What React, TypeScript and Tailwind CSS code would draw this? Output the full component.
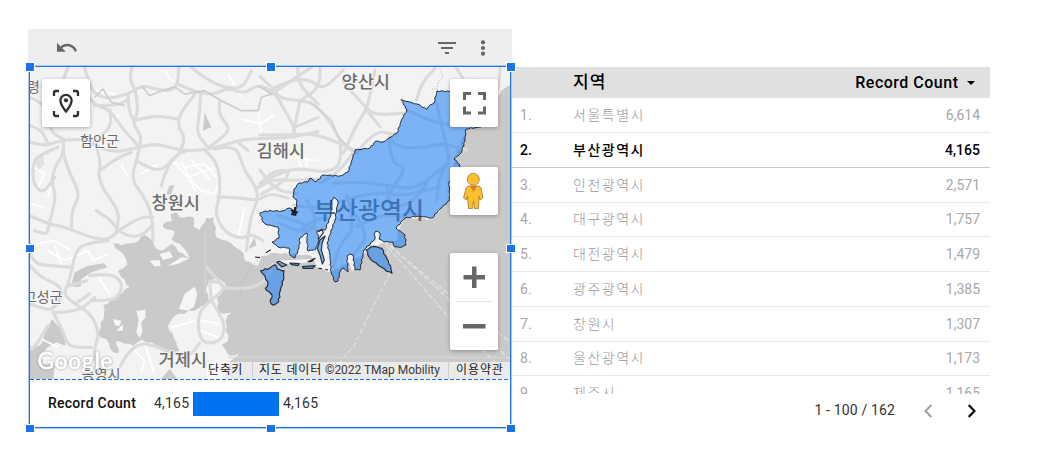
import type { ReactNode } from "react";

const rows = [
  { name: "서울특별시", count: "6,614", h: "h-[35px]" },
  { name: "부산광역시", count: "4,165", h: "h-[35px]", selected: true },
  { name: "인천광역시", count: "2,571", h: "h-[35px]" },
  { name: "대구광역시", count: "1,757", h: "h-[34px]" },
  { name: "대전광역시", count: "1,479", h: "h-[35px]" },
  { name: "광주광역시", count: "1,385", h: "h-[35px]" },
  { name: "창원시", count: "1,307", h: "h-[35px]" },
  { name: "울산광역시", count: "1,173", h: "h-[34px]" },
  { name: "제주시", count: "1,165", h: "h-[35px]" },
];

const westRoads = [
  "M6 235L50 247L100 228L180 226L200 245L260 266L330 250L390 238L460 262L530 258L600 240L650 225L750 222L790 220L870 203",
  "M120 10L98 60L130 85L160 60L180 95L205 125L245 137L280 190L330 245",
  "M170 10L180 50L200 90L240 105L300 90L325 75L350 65L400 80L435 78L450 55L452 10",
  "M312 10L302 45L325 80L330 150L312 175L340 215L335 250L325 290L310 345L345 395L365 430L374 480L375 530",
  "M300 90L302 145L320 170L350 162L390 155L450 165",
  "M325 290L370 318L410 315L440 275L480 258",
  "M200 125L235 125L280 120L300 105M6 185L40 195L60 240",
  "M450 60L500 85L560 92L600 70L650 90L690 60L740 85L765 130L800 190L795 220",
  "M500 92L455 145L450 190L470 215L460 262L430 290L410 330L400 365",
  "M518 95L515 150L505 205L535 245M575 115L570 150L605 190L590 215L545 248",
  "M560 255L620 242L640 290L650 320L685 370L690 410L668 455L655 560",
  "M530 258L560 285L575 330L575 400L560 450L590 505L640 525L670 510L705 530",
  "M570 398L640 402L690 410L725 388L780 402",
  "M6 455L60 480L110 488L180 518L240 530L270 500L340 458L374 460",
  "M105 260L115 310L158 390L133 435L130 490",
  "M105 225L110 265L82 305L70 350L85 400L60 490L58 512L20 500",
  "M90 250L30 275L15 300L15 360L45 390L80 340",
  "M205 250L220 295L210 330L225 375L245 400L275 450L265 500M205 440L250 468L270 500L310 520L350 510L375 480",
  "M215 320L260 285L310 265M490 10L550 60L640 80L670 20",
  "M240 530L165 538L140 570L125 650L105 690L140 720L190 750L215 810L195 860L210 925",
  "M6 605L35 640L90 660L105 690L75 740L35 730L6 720M120 665L175 650",
  "M6 570L20 600L70 605L130 610M60 785L15 860L6 850",
  "M75 745L150 745L200 700M78 750L105 800L120 850L190 850M140 720L185 690",
  "M185 635L245 627L280 650L280 685L255 708L195 710M545 652L575 652L590 675L555 705L508 745L515 838L580 835L592 780L565 735L550 705M545 655L550 705",
  "M515 838L488 880L440 870L390 850L340 835L300 865L275 910M590 672L660 677L715 650L735 600",
  "M6 100L50 120L55 150L70 205L105 225M245 137L255 180L215 220M690 370L730 345L790 350L870 345M700 390L760 360L790 320L740 320L700 355",
  "M730 90L850 10M800 190L870 160M660 260L630 235M810 10L805 55L870 120M590 670L535 610",
];

const northRoads = [
  "M0 170L40 205L60 235L120 242L160 250L210 302L240 365L285 400",
  "M0 345L100 345L160 340L240 370L280 390M120 242L100 340",
  "M250 400L290 312L320 270L335 200L345 150M290 400L340 330L410 345",
  "M250 185L320 268L350 285L430 280M320 270L360 320M180 145L185 200L120 242",
  "M240 360L248 430L200 460L100 440L0 490M0 450L40 510L110 520M285 390L245 450L180 490",
  "M40 205L90 180L150 178L190 210L250 150M470 240L480 195L525 145",
  "M440 270L500 300L580 318M590 145L630 215L650 180M720 145L715 220L690 240",
  "M390 350L400 380L480 385L540 372L570 375L620 390M388 350L390 430L440 440L400 500L380 540",
  "M220 490L290 485L380 495L470 510L560 430M530 250L545 320L560 375L570 430L540 460L530 540",
];

const southRoads = [
  "M160 75L240 90L300 62L420 35L480 50L600 20M200 60L240 130L190 160L120 130",
  "M110 105L180 125L260 165M320 45L350 140L300 190L280 260M350 140L420 100L500 110",
  "M440 20L450 90L520 65L560 10M345 105L390 160L340 225M180 150L230 110L300 120",
];

const minorRoads =
  "M430 290L470 310L530 300L575 350L560 390L520 380L470 330ZM460 290L500 380M490 290L550 350M480 340L560 310M640 165L700 180L740 150M690 140L700 210M20 310L50 330L30 370M6 420L50 430M60 560L110 590L180 560L195 590L240 570M80 545L100 600M210 640L245 690M320 860L350 890L340 930M350 840L380 930M430 790L500 770M520 770L575 780M520 800L570 820M780 270L840 285L830 320M800 260L820 310M200 80L260 90M410 20L430 50M600 30L640 100M240 170L280 150M80 310L60 400M30 820L90 850M40 880L120 905M650 430L630 520M760 280L870 290M20 540L80 530L130 560M720 230L760 270M340 330L390 300M280 300L300 340";

const landArea = "M6 9H1455V960H6Z";
const sea =
  "M245 535L280 544L330 532L350 512L375 533L385 555L430 560L460 578L488 585L455 605L380 602L365 590L395 587L395 567L432 540L452 565L486 580L465 550L430 525L440 502L405 490L405 480L432 472L428 450L445 445L455 460L497 460L497 488L515 498L535 462L557 460L565 520L595 530L640 560L655 592L690 605L700 575L745 567L850 575L870 615L909 624L1002 573L1035 545L1104 530L1115 492L1131 462L1212 465L1263 408L1273 354L1278 285L1314 198L1359 189L1386 138L1420 80L1455 55L1455 960L585 960L600 902L634 868L605 875L580 842L600 830L592 770L600 750L575 745L565 700L595 665L575 645L545 650L535 680L545 715L510 735L440 755L420 785L445 835L455 860L430 865L400 850L342 827L315 845L265 830L272 868L255 865L235 825L210 815L228 750L226 722L260 708L285 685L305 668L280 640L270 620L298 602L285 570Z";

const busan =
  "M401 99.5L407 101.5L417 104L427 109.3L430 105L434 103L437 91L450 91.5L470 86L482 108L481 127L466 129L465 141L461 153L454 159L460 165L455 177L449 182L450 200L440 209L432 218L418 216L405 218L396 228L405 235L406 245L402 247L395 247L393 242L384 242L379 239L380 233L376 231L374 234L375 239L364 250L360 270L355 270L353 255L350 254L347 256L348 272L343 268L340 272L338 281L335 282L331 272L330 255L327 243L335 220L338 201L334 197L331 201L331 215L325 230L317 231L319 240L316 249L308 251L307 240L307 233L300 238L299 248L295 258L290 255L289 248L278 247L272 242L279 238L278 227L268 225L263 222L260 213L265 211L282 211L290 208L296 212L297 200L293 197L294 189L299 183L308 182L310 178L316 182L323 175L340 176L348 172L352 160L355 150L370 148L376 141L383 142L397 133L402 119L407 110L405 106Z";

type Point = [number, number];

function subpaths(d: string): Point[][] {
  return d
    .replace(/Z/g, "")
    .split("M")
    .filter(Boolean)
    .map((part) => part.split("L").map((pair) => pair.split(" ").map(Number) as Point));
}

// Rounds every bend of a polyline with a quadratic curve between segment midpoints.
function smooth(d: string) {
  return subpaths(d)
    .map((pts) => {
      let out = `M${pts[0][0]} ${pts[0][1]}`;
      for (let i = 1; i < pts.length - 1; i++) {
        const [x, y] = pts[i];
        const [nx, ny] = pts[i + 1];
        out += `Q${x} ${y} ${(x + nx) / 2} ${(y + ny) / 2}`;
      }
      const [ex, ey] = pts[pts.length - 1];
      return `${out}L${ex} ${ey}`;
    })
    .join("");
}

// Splits a closed outline into short steps with small repeatable offsets, like a surveyed coast.
function rugged(d: string, step: number, amount: number) {
  return subpaths(d)
    .map((pts) => {
      let out = "";
      pts.forEach(([x, y], i) => {
        const [nx, ny] = pts[(i + 1) % pts.length];
        const length = Math.hypot(nx - x, ny - y) || 1;
        const count = Math.max(1, Math.round(length / step));
        for (let k = 0; k < count; k++) {
          const t = k / count;
          const wave = k === 0 ? 0 : amount * Math.sin(i * 7.3 + k * 2.6);
          const px = x + (nx - x) * t - ((ny - y) / length) * wave;
          const py = y + (ny - y) * t + ((nx - x) / length) * wave;
          out += `${out ? "L" : "M"}${px.toFixed(2)} ${py.toFixed(2)}`;
        }
      });
      return `${out}Z`;
    })
    .join("");
}

function MapLabel({ x, y, size, weight = 500, children }: { x: number; y: number; size: number; weight?: number; children: string }) {
  return (
    <text x={x} y={y} fontSize={size} fontWeight={weight} fill="#6c6c6c" stroke="#f5f5f5" strokeWidth="2" paintOrder="stroke" strokeLinejoin="round">
      {children}
    </text>
  );
}

function RegionMap() {
  return (
    <svg viewBox="30 67 480 312" className="block h-[312px] w-[480px] font-['Noto_Sans_CJK_KR',sans-serif]">
      <g transform="translate(28 64) scale(.33333)">
        <path d={landArea} fill="#f3f3f3" />
        <path d={rugged(sea, 14, 3)} fill="#cacaca" />
        <g fill="#cacaca">
          <path d="M6 860L40 840L52 805L72 765L108 808L112 845L85 835L60 850L38 870L45 900L80 905L75 955H6Z" />
          <path d="M132 655L140 625L180 605L228 598L238 610L190 625L160 645L158 668H135ZM525 200L530 145L545 180L550 190ZM415 390L425 365L440 362L428 392ZM660 555L680 520L685 545ZM390 955L425 915L455 955Z" />
          <path d="M20 280L45 275L50 300L30 320Z" fill="#e1e1e1" />
        </g>
        <g fill="#f5f5f5">
          <path d="M325 740L352 737L353 760L340 775L343 805L335 822L325 805L332 770Z" />
          <path d="M453 735L470 690L500 668L508 690L498 728L480 740ZM365 590L395 588L398 605L380 608ZM395 570L425 562L435 580L405 588ZM420 605L460 580L485 583L450 600ZM535 675L545 648L590 655L580 690L550 715Z" />
          <path d="M255 765L280 770L275 785L262 785ZM265 800L285 780L285 800ZM590 747L612 747L600 753ZM740 590L850 585L845 595L765 600Z" />
        </g>
        <path d={minorRoads} fill="none" stroke="#fff" strokeWidth="5" />
        <g fill="none" stroke="#dbdbdb" strokeWidth="9.5" strokeLinejoin="round" strokeLinecap="round">
          {westRoads.map((d) => <path key={d} d={smooth(d)} />)}
        </g>
        <path d="M200 100L225 75L250 115L290 125M340 65L365 95L390 85L440 68L470 90L530 80L580 110L640 140L690 140L700 100L730 90L690 65" fill="none" stroke="#cdcdcd" strokeWidth="5" />
        <path d="M532 500V690M600 880H1455" stroke="#d6d6d6" strokeWidth="3" />
        <path d="M690 590C665 610 635 650 641 700" fill="none" stroke="#b5b5b5" strokeWidth="2.5" strokeDasharray="5 6" />
      </g>
      <g fill="none" stroke="#dbdbdb" strokeWidth="9.5" strokeLinejoin="round" strokeLinecap="round">
        <g transform="translate(260 20) scale(.33333)">
          {northRoads.map((d) => <path key={d} d={smooth(d)} />)}
          <path d="M530 210L535 185L550 170L540 148" stroke="#c8c8c8" strokeWidth="3" strokeDasharray="4 6" />
          <path d="M150 245L215 300L235 350L280 395" stroke="#c9c9c9" strokeWidth="3" />
        </g>
        <g transform="translate(240 180) scale(.33333)">
          {southRoads.map((d) => <path key={d} d={smooth(d)} />)}
          <g stroke="#e2e2e2" strokeWidth="3.5" strokeDasharray="16 7" strokeLinecap="butt">
            <path d="M440 190L452 275L380 420L340 500L260 590M430 185L620 405L800 580M450 195L640 370L815 545M450 200L630 345L815 490" />
          </g>
        </g>
      </g>
      <path d="M331 201L334 197L338 201L336 220L328 240L331 268L327 270L326 240L320 245L318 232L326 229ZM347 256L352 253L356 269L352 271ZM365 250L375 238L374 232L380 233L380 240L373 245L366 253ZM299 248L300 238L307 233L308 250Z" fill="#f0f0f0" />
      <MapLabel x={341.5} y={88} size={17.6}>양산시</MapLabel>
      <MapLabel x={256.5} y={157} size={17.6}>김해시</MapLabel>
      <MapLabel x={151.5} y={209} size={17.6}>창원시</MapLabel>
      <MapLabel x={158.5} y={366} size={17.6}>거제시</MapLabel>
      <MapLabel x={80} y={146} size={14.2} weight={400}>함안군</MapLabel>
      <MapLabel x={23.5} y={302} size={14.2} weight={400}>고성군</MapLabel>
      <MapLabel x={81.5} y={379} size={14.2} weight={400}>통영시</MapLabel>
      <MapLabel x={27} y={92} size={14} weight={400}>령</MapLabel>
      <text x="314" y="218.5" fontSize="23.9" fontWeight="500" fill="#686868">부산광역시</text>
      <g fill="#177df5" fillOpacity=".55" stroke="#1d2733" strokeOpacity=".95" strokeWidth="1" strokeLinejoin="round">
        <path d={rugged(busan, 2.6, 0.6)} />
        <g transform="translate(240 180) scale(.33333)" strokeWidth="3.5">
          <path d={rugged("M62 272L90 264L105 254L112 268L132 272L130 300L120 335L116 365L100 376L91 366L96 345L76 325L84 312L76 290Z", 8, 2)} />
          <path d={rugged("M378 210L400 199L425 205L440 235L452 258L456 280L440 274L425 262L402 246L388 232Z", 8, 2)} />
          <path d="M110 246L118 244L140 255L126 261ZM150 249L178 251L174 257L155 254ZM187 260L225 257L218 265L190 265ZM204 245L225 235L215 244ZM232 205L240 180L255 168L246 190L244 210L253 240L247 252L240 225Z" />
          <path d="M235 155L245 148L250 158L235 178M45 231L60 233M78 218L92 209M235 265L246 266M256 268L264 270" fill="none" />
        </g>
      </g>
      <path d="M290 210L292 212L291 215L296 216L297 213L299 212L296 211L296 207L294 207L294 210Z" fill="#1b2229" />
      <text
        x="37.5"
        y="369"
        textLength="75"
        fontSize="22.5"
        fill="#fff"
        stroke="#fff"
        strokeWidth=".7"
        className="font-['Lato',sans-serif] drop-shadow-[0_0_1px_rgba(90,90,90,0.6)]"
      >
        Google
      </text>
    </svg>
  );
}

function ControlCard({ className, children }: { className: string; children: ReactNode }) {
  return (
    <div className={`absolute flex w-12 items-center justify-center rounded-[2px] bg-white shadow-[0_1px_4px_rgba(0,0,0,0.3)] ${className}`}>
      {children}
    </div>
  );
}

function MapControls() {
  return (
    <>
      <ControlCard className="top-3 left-3 h-12">
        <svg viewBox="42 79 48 48" className="size-12" fill="none" stroke="#2f2f2f" strokeWidth="2.3">
          <path d="M54 96V93Q54 91 56 91H59M73 91H76Q78 91 78 93V96M54 111V114Q54 116 56 116H59M73 116H76Q78 116 78 114V111" />
          <path d="M66 111.5C62.5 107 60.4 103.5 60.4 100.4A5.6 5.6 0 0 1 71.6 100.4C71.6 103.5 69.5 107 66 111.5Z" />
          <circle cx="66" cy="100.3" r="2.1" fill="#2f2f2f" stroke="none" />
        </svg>
      </ControlCard>
      <ControlCard className="top-3 left-[420px] h-12">
        <svg viewBox="450 79 48 48" className="size-12" fill="none" stroke="#666" strokeWidth="3">
          <path d="M464.5 100V93.5H471M478 93.5H484.5V100M464.5 106.5V113H471M478 113H484.5V106.5" />
        </svg>
      </ControlCard>
      <ControlCard className="top-[100px] left-[420px] h-12">
        <svg viewBox="450 167 48 48" className="size-12">
          <path d="M468 186H479L481 188L483 198L480 200L479 196L478.5 208.5H474.5L473.5 201L472.5 208.5H468.5L467.5 196L466.5 200L463.5 198L466 188Z" fill="#fdbf2d" stroke="#9b7a3c" strokeWidth=".8" />
          <path d="M470 186H477L473.5 192Z" fill="#e27a2c" />
          <circle cx="473.3" cy="179.3" r="6" fill="#fdbf2d" stroke="#9b7a3c" strokeWidth=".8" />
        </svg>
      </ControlCard>
      <ControlCard className="top-[186px] left-[420px] h-[97px] flex-col">
        <svg viewBox="0 0 48 48" className="size-12" fill="#666"><path d="M22 13.5h4.5V22h8.500v4.5h-8.500V35H22v-8.500h-8.500V22H22z" /></svg>
        <div className="h-px w-9 bg-[#e0e0e0]" />
        <svg viewBox="0 0 48 48" className="size-12" fill="#666"><path d="M13 22h22.500v4.500H13z" /></svg>
      </ControlCard>
    </>
  );
}

function Attribution() {
  return (
    <div className="absolute right-0 bottom-0 flex h-[17px] items-center bg-white/60 font-[Roboto,'Noto_Sans_CJK_KR',sans-serif] text-[12px] leading-[17px] whitespace-nowrap text-[#1a1a1a]">
      <span className="w-[45px] pl-px tracking-[0.6px]">단축키</span>
      <span className="flex h-full w-[197px] border-x border-[#cfcfcf] pl-[6px]">
        <span className="w-[66px] tracking-[0.8px]">지도 데이터</span>
        <span className="text-[#3a3a3a] tracking-[-0.03px]">©2022 TMap Mobility</span>
      </span>
      <span className="w-[61px] pl-[7px] tracking-[0.9px]">이용약관</span>
    </div>
  );
}

const handles = [
  "left-[-3px] top-[-3px] h-2",
  "left-[238px] top-[-3px] h-2",
  "left-[478px] top-[-3px] h-2",
  "left-[-3px] top-[179px] h-[7px]",
  "left-[478px] top-[179px] h-[7px]",
  "left-[-3px] top-[359px] h-[7px]",
  "left-[238px] top-[359px] h-[7px]",
  "left-[478px] top-[359px] h-[7px]",
];

function MapPanel() {
  return (
    <section className="w-[484px] pt-[29px]">
      <div className="flex h-[37px] items-center justify-between bg-[#eee] pr-[17px] pl-[27px] text-[#666]">
        <svg viewBox="0 0 24 24" className="size-[23.5px]" fill="currentColor"><path d="M12.5 8c-2.65 0-5.05.99-6.9 2.6L2 7v9h9l-3.62-3.62c1.39-1.16 3.16-1.88 5.12-1.88 3.54 0 6.55 2.31 7.6 5.5l2.37-.78C21.08 11.03 17.15 8 12.5 8z" /></svg>
        <div className="flex items-center gap-3">
          <svg viewBox="0 0 24 24" className="size-6" fill="currentColor"><path d="M10 18h4v-2h-4v2zM3 6v2h18V6H3zm3 7h12v-2H6v2z" /></svg>
          <svg viewBox="0 0 24 24" className="size-6" fill="currentColor"><circle cx="12" cy="6.3" r="2.1" /><circle cx="12" cy="12" r="2.1" /><circle cx="12" cy="17.7" r="2.1" /></svg>
        </div>
      </div>
      <div className="relative ml-px h-[362px] w-[482px] border border-[#1a73e8] bg-white shadow-[0_0_0_1px_#a9caf7]">
        <div className="relative h-[312px] overflow-hidden">
          <RegionMap />
          <MapControls />
          <Attribution />
        </div>
        <svg viewBox="0 0 480 1" className="block h-px w-[480px]"><path d="M0 .5H480" stroke="#1a73e8" strokeDasharray="4 2" /></svg>
        <div className="flex h-[47px] items-center pl-[18px] text-[14px] text-[#333]">
          <span className="w-[106px] font-medium tracking-[0.25px] text-[#111]">Record Count</span>
          <span className="w-[39px] tracking-[0.2px]">4,165</span>
          <div className="mr-1 h-6 w-[86px] bg-[#0072f0]" />
          <span className="tracking-[0.2px]">4,165</span>
        </div>
        {handles.map((place) => (
          <i key={place} className={`absolute w-2 bg-[#1a73e8] shadow-[0_0_0_1px_#fff] ${place} -translate-x-px -translate-y-px`} />
        ))}
      </div>
    </section>
  );
}

function RegionTable() {
  return (
    <section className="w-[478px] pt-[67px]">
      <header className="flex h-[31px] items-center bg-[#e0e0e0] text-[16px] text-black">
        <span className="flex-1 pl-[61px] text-[17px] font-medium tracking-[1px]">지역</span>
        <span className="font-medium tracking-[0.5px]">Record Count</span>
        <svg viewBox="0 0 8 4" className="mr-[15px] ml-[8.5px] h-1 w-2"><path d="M0 0H8L4 4Z" /></svg>
      </header>
      <div className="h-[296px] overflow-hidden">
        {rows.map((row, i) => (
          <div
            key={row.name}
            className={`flex items-center border-b pr-[10px] pl-2 text-[14px] ${row.h} ${row.selected ? "border-[#cacaca] font-medium text-black" : "border-[#e8e8e8] text-[#a8a8a8]"}`}
          >
            <span className="w-[53px]">{i + 1}.</span>
            <span className={`flex-1 tracking-[1.5px] ${row.selected ? "font-medium" : "font-light text-[#999]"}`}>{row.name}</span>
            <span>{row.count}</span>
          </div>
        ))}
      </div>
      <footer className="flex h-[33px] items-center justify-end text-[14px] text-[#333]">
        <span className="tracking-[0.15px]">1 - 100 / 162</span>
        <svg viewBox="0 0 8 14" className="ml-[29px] h-[14px] w-2" fill="none" stroke="#a0a0a0" strokeWidth="2"><path d="M7.3 1L1.5 7L7.3 13" /></svg>
        <svg viewBox="0 0 8 14" className="mr-[14px] ml-9 h-[14px] w-2" fill="none" stroke="#111" strokeWidth="2.3"><path d="M.7 1L6.5 7L.7 13" /></svg>
      </footer>
    </section>
  );
}

export default function App() {
  return (
    <main className="flex h-[466px] w-[1044px] overflow-hidden bg-white pl-7 font-[Roboto,'Noto_Sans_CJK_KR',sans-serif]">
      <MapPanel />
      <RegionTable />
    </main>
  );
}
